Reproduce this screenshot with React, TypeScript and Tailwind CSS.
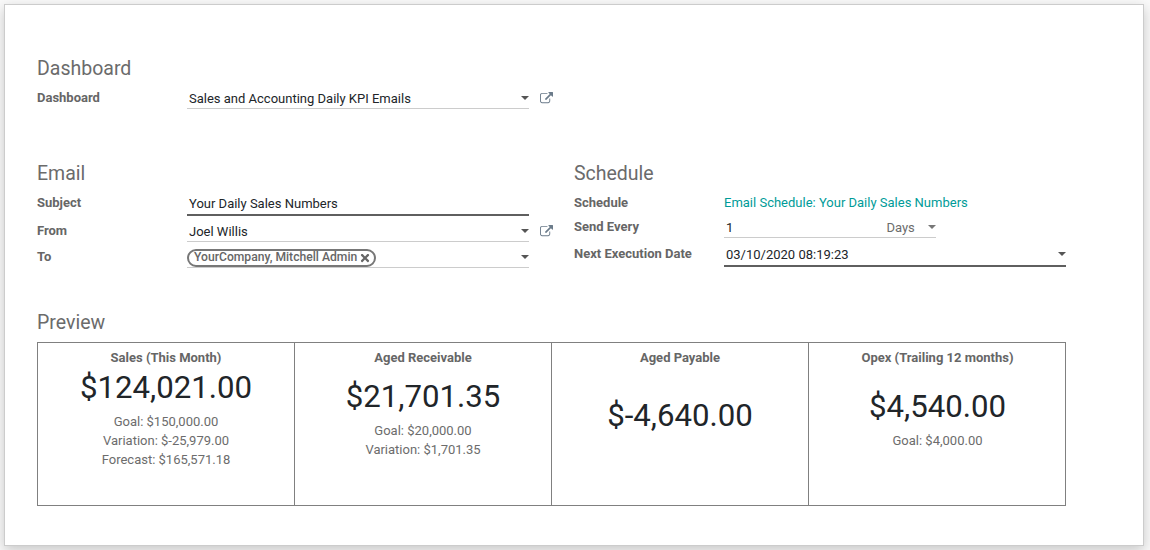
import { FaTimes } from "react-icons/fa";

interface KpiProps {
  title: string;
  amount: string;
  lines: string[];
}

const kpis: KpiProps[] = [
  {
    title: "Sales (This Month)",
    amount: "$124,021.00",
    lines: ["Goal: $150,000.00", "Variation: $-25,979.00", "Forecast: $165,571.18"],
  },
  {
    title: "Aged Receivable",
    amount: "$21,701.35",
    lines: ["Goal: $20,000.00", "Variation: $1,701.35"],
  },
  { title: "Aged Payable", amount: "$-4,640.00", lines: [] },
  { title: "Opex (Trailing 12 months)", amount: "$4,540.00", lines: ["Goal: $4,000.00"] },
];

function Caret({ light }: { light?: boolean }) {
  return (
    <span
      className={`w-0 h-0 mb-[2px] border-x-[4px] border-x-transparent border-t-[4px] ${
        light ? "border-t-[#777777]" : "border-t-[#555555]"
      }`}
    />
  );
}

function Heading({ children }: { children: string }) {
  return <h2 className="h-[28px] text-[19.5px] leading-[30px] font-normal text-[#6b6b6b]">{children}</h2>;
}

function Label({ children, className }: { children: string; className: string }) {
  return <div className={`font-bold text-[#666666] ${className}`}>{children}</div>;
}

function OpenLink() {
  return (
    <svg viewBox="0 0 1792 1792" className="ml-[11px] mb-[4px] w-[13px] h-[13px] fill-[#6b7b8a]">
      <path d="M1408 928v320q0 119-84.5 203.5t-203.5 84.5h-832q-119 0-203.5-84.5t-84.5-203.5v-832q0-119 84.5-203.5t203.5-84.5h704q14 0 23 9t9 23v64q0 14-9 23t-23 9h-704q-66 0-113 47t-47 113v832q0 66 47 113t113 47h832q66 0 113-47t47-113v-320q0-14 9-23t23-9h64q14 0 23 9t9 23zm384-864v512q0 26-19 45t-45 19-45-19l-176-176-652 652q-10 10-23 10t-23-10l-114-114q-10-10-10-23t10-23l652-652-176-176q-19-19-19-45t19-45 45-19h512q26 0 45 19t19 45z" />
    </svg>
  );
}

function Kpi({ title, amount, lines }: KpiProps) {
  return (
    <div className="w-[257px] shrink-0 border-r border-[#808080] last:border-r-0 pt-[5px] text-center">
      <div className="h-[19px] leading-[19px] font-bold text-[#666666]">{title}</div>
      <div className="h-[98px] flex flex-col justify-center">
        <div className="text-[31.2px] leading-[48px] text-[#212529]">{amount}</div>
        {lines.map((line) => (
          <div key={line} className="leading-[19px] text-[#6c6c6c]">
            {line}
          </div>
        ))}
      </div>
    </div>
  );
}

export default function App() {
  return (
    <div className="w-[1150px] h-[550px] overflow-hidden bg-[#f9f9f9] pt-[4px] pl-[4px] font-['Roboto',sans-serif] text-[13px] text-[#212529]">
      <div className="w-[1140px] h-[542px] bg-white border border-[#cccccc] shadow-[0_4px_12px_rgba(0,0,0,0.2)] pl-[32px] pt-[49px]">
        <Heading>Dashboard</Heading>
        <div className="flex items-end mt-[6px] h-[21px]">
          <Label className="w-[150px] self-start leading-[20px]">Dashboard</Label>
          <div className="w-[342px] h-[21px] flex items-center justify-between border-b border-[#cccccc] pl-[2px] pt-[1px]">
            <span className="leading-[19px]">Sales and Accounting Daily KPI Emails</span>
            <Caret />
          </div>
          <OpenLink />
        </div>

        <div className="flex mt-[50px]">
          <div className="w-[537px] shrink-0">
            <Heading>Email</Heading>
            <div className="flex items-end mt-[6px] h-[23px]">
              <Label className="w-[150px] self-start leading-[20px]">Subject</Label>
              <div className="w-[342px] h-[23px] border-b-2 border-[#5f5f5f] pl-[2px] leading-[22px]">
                Your Daily Sales Numbers
              </div>
            </div>
            <div className="flex items-end mt-[5px] h-[21px]">
              <Label className="w-[150px] self-start leading-[20px]">From</Label>
              <div className="w-[342px] h-[21px] flex items-center justify-between border-b border-[#cccccc] pl-[2px] pt-[1px]">
                <span className="leading-[19px]">Joel Willis</span>
                <Caret />
              </div>
              <OpenLink />
            </div>
            <div className="flex items-end mt-[5px] h-[21px]">
              <Label className="w-[150px] self-start leading-[20px]">To</Label>
              <div className="w-[342px] h-[21px] flex items-center justify-between border-b border-[#cccccc] pt-[1px]">
                <span className="flex items-center h-[18px] gap-[2px] border-2 border-[#777777] rounded-full pl-[5px] pr-[3px] font-medium text-[12.15px] text-[#666666]">
                  YourCompany, Mitchell Admin
                  <FaTimes size={12} />
                </span>
                <Caret />
              </div>
            </div>
          </div>

          <div>
            <Heading>Schedule</Heading>
            <div className="flex h-[19px] mt-[6px] leading-[20px]">
              <Label className="w-[150px]">Schedule</Label>
              <span className="text-[#009b98]">Email Schedule: Your Daily Sales Numbers</span>
            </div>
            <div className="flex items-end h-[20px] mt-[6px]">
              <Label className="w-[150px] self-start leading-[18px]">Send Every</Label>
              <div className="w-[212px] h-[20px] flex items-center border-b border-[#cccccc] pl-[2px] pt-[1px]">
                <span className="w-[162px]">1</span>
                <span className="w-[42px] text-[#6c6c6c]">Days</span>
                <Caret light />
              </div>
            </div>
            <div className="flex items-end h-[24px] mt-[5px]">
              <Label className="w-[150px] self-start leading-[22px]">Next Execution Date</Label>
              <div className="w-[342px] h-[24px] flex items-center justify-between border-b-2 border-[#5f5f5f] pl-[2px] pt-[1px]">
                <span>03/10/2020 08:19:23</span>
                <Caret />
              </div>
            </div>
          </div>
        </div>

        <div className="mt-[40px]">
          <Heading>Preview</Heading>
          <div className="flex w-[1029px] h-[164px] mt-[6px] border border-[#808080]">
            {kpis.map((kpi) => (
              <Kpi key={kpi.title} {...kpi} />
            ))}
          </div>
        </div>
      </div>
    </div>
  );
}
